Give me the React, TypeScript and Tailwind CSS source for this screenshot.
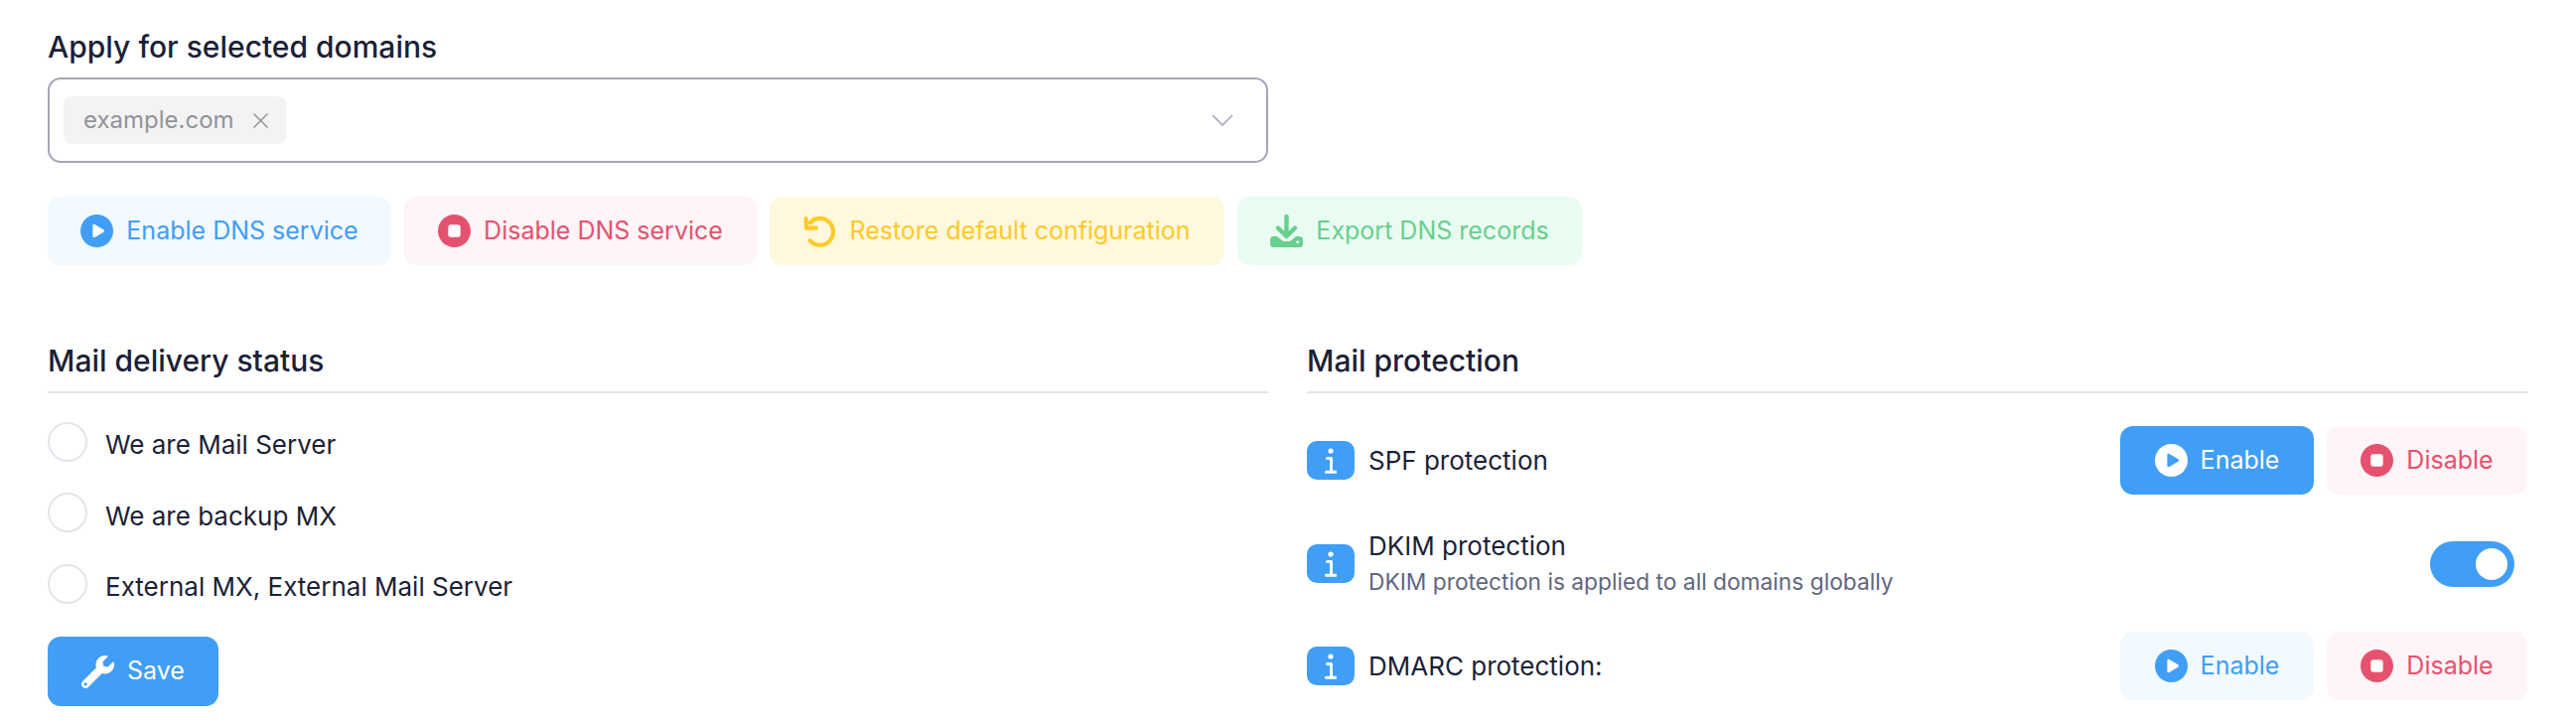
import React from 'react';
import { FaWrench } from 'react-icons/fa';

const font = "font-['Inter','Noto_Sans',sans-serif]";

function PlayIcon({ inverted }: { inverted?: boolean }) {
  return (
    <svg viewBox="0 0 32 32" className="w-[33px] h-[33px] shrink-0">
      <circle cx="16" cy="16" r="16" fill={inverted ? '#ffffff' : '#409ef6'} />
      <path
        d="M12 10.8c0-1 1.1-1.6 2-1.1l8.6 5.2c.9.5.9 1.7 0 2.2L14 22.300c-.9.5-2-.1-2-1.100z"
        fill={inverted ? '#409ef6' : '#ffffff'}
      />
    </svg>
  );
}

function StopIcon() {
  return (
    <svg viewBox="0 0 32 32" className="w-[33px] h-[33px] shrink-0">
      <circle cx="16" cy="16" r="16" fill="#e5526f" />
      <rect x="10" y="10" width="12" height="12" rx="2.500" fill="#ffffff" />
    </svg>
  );
}

function RestoreIcon() {
  return (
    <svg viewBox="0 0 32 32" className="w-[33px] h-[33px] shrink-0" fill="none" stroke="#ffc928" strokeWidth="4" strokeLinecap="round" strokeLinejoin="round">
      <path d="M2.500 4l.5 9.500 9.500-.5" />
      <path d="M6.500 8A13 13 0 1 1 6.500 25.500" />
    </svg>
  );
}

function ExportIcon() {
  return (
    <svg viewBox="0 0 33 33" className="w-[33px] h-[33px] shrink-0">
      <path d="M16.500 2v19M8 13.500l8.500 8.500 8.500-8.500" fill="none" stroke="#69cf8d" strokeWidth="4.400" strokeLinecap="round" strokeLinejoin="round" />
      <path
        d="M3.500 22H7l6 5h7l6-5h3.500A3.500 3.500 0 0 1 33 25.500v4a3.500 3.500 0 0 1-3.500 3.500h-26A3.500 3.500 0 0 1 0 29.500v-4A3.500 3.500 0 0 1 3.500 22z"
        fill="#69cf8d"
      />
      <circle cx="27.700" cy="27.800" r="1.500" fill="#e9fcf2" />
    </svg>
  );
}

function ActionButton({ tone, icon, label, className }: { tone: string; icon: React.ReactNode; label: string; className: string }) {
  return (
    <button className={`flex items-center justify-center gap-[13px] h-[69px] rounded-[13px] text-[25px] ${tone} ${className}`}>
      {icon}
      <span>{label}</span>
    </button>
  );
}

function DeliveryOption({ label }: { label: string }) {
  return (
    <label className="flex items-center gap-[18px] h-[41px] text-[26px] text-[#1c1f37]">
      <span className="w-[40px] h-[40px] rounded-full border-2 border-[#e3e5ec] bg-white shrink-0 -translate-y-[3px]" />
      <span>{label}</span>
    </label>
  );
}

function InfoBadge() {
  return (
    <span className="flex items-center justify-center w-[48px] h-[39px] rounded-[10px] bg-[#409ef6] shrink-0">
      <svg viewBox="0 0 12 26" className="w-[12px] h-[26px]" fill="none" stroke="#ffffff" strokeWidth="3" strokeLinecap="round" strokeLinejoin="round">
        <circle cx="6" cy="3" r="2.600" fill="#ffffff" stroke="none" />
        <path d="M2.500 10.500H6.500V24M1.500 24.300h9.500" />
      </svg>
    </span>
  );
}

export default function App() {
  return (
    <div className={`${font} w-[2594px] h-[732px] bg-white overflow-hidden pl-[48px] pr-[49px] pt-[28px]`}>
      <h2 className="text-[30px] leading-[38px] font-medium text-[#1c1f37]">Apply for selected domains</h2>

      <div className="w-[1229px] h-[86px] mt-[12px] flex items-center justify-between rounded-[13px] border-2 border-[#a3a5ba] pl-[14px] pr-[33px]">
        <span className="flex items-center h-[48px] w-[224px] rounded-[8px] bg-[#f3f3f3] pl-[20px] text-[24px] text-[#92939a]">
          example.com
          <svg viewBox="0 0 15 15" className="w-[15px] h-[15px] ml-[19px]" fill="none" stroke="#92939a" strokeWidth="1.500">
            <path d="M.5.5l14 14M14.500.5l-14 14" />
          </svg>
        </span>
        <svg viewBox="0 0 22 12" className="w-[22px] h-[12px]" fill="none" stroke="#a3a5ba" strokeWidth="1.600">
          <path d="M1 1l10 10L21 1" />
        </svg>
      </div>

      <div className="flex mt-[34px] gap-[13px]">
        <ActionButton tone="bg-[#f2f9ff] text-[#409ef6]" icon={<PlayIcon />} label="Enable DNS service" className="w-[346px]" />
        <ActionButton tone="bg-[#fff4f7] text-[#e5526f]" icon={<StopIcon />} label="Disable DNS service" className="w-[355px]" />
        <ActionButton tone="bg-[#fff8dc] text-[#ffc928]" icon={<RestoreIcon />} label="Restore default configuration" className="w-[458px]" />
        <ActionButton tone="bg-[#e9fcf2] text-[#69cf8d]" icon={<ExportIcon />} label="Export DNS records" className="w-[347px]" />
      </div>

      <div className="grid grid-cols-2 gap-[39px] mt-[75px]">
        <section>
          <h3 className="text-[30px] leading-[42px] font-medium text-[#1c1f37] border-b-2 border-[#e2e6ea] h-[54px]">Mail delivery status</h3>
          <div className="flex flex-col gap-[30.500px] mt-[31px]">
            <DeliveryOption label="We are Mail Server" />
            <DeliveryOption label="We are backup MX" />
            <DeliveryOption label="External MX, External Mail Server" />
          </div>
          <button className="flex items-center justify-center gap-[13px] w-[172px] h-[70px] mt-[30px] rounded-[13px] bg-[#409ef6] text-white text-[25px]">
            <FaWrench className="w-[33px] h-[33px] shrink-0" />
            <span>Save</span>
          </button>
        </section>

        <section>
          <h3 className="text-[30px] leading-[42px] font-medium text-[#1c1f37] border-b-2 border-[#e2e6ea] h-[54px]">Mail protection</h3>
          <div className="flex items-center justify-between h-[69px] mt-[33px]">
            <div className="flex items-center gap-[14px] text-[26px] text-[#1c1f37]">
              <InfoBadge />
              <span>SPF protection</span>
            </div>
            <div className="flex gap-[13px]">
              <ActionButton tone="bg-[#409ef6] text-white" icon={<PlayIcon inverted />} label="Enable" className="w-[195px]" />
              <ActionButton tone="bg-[#fff4f7] text-[#e5526f]" icon={<StopIcon />} label="Disable" className="w-[202px]" />
            </div>
          </div>
          <div className="flex items-center justify-between h-[69px] mt-[35px]">
            <div className="flex items-center gap-[14px]">
              <InfoBadge />
              <div>
                <div className="text-[26px] leading-[34px] text-[#1c1f37]">DKIM protection</div>
                <div className="text-[22.750px] leading-[32px] mt-[3.500px] text-[#62667f]">DKIM protection is applied to all domains globally</div>
              </div>
            </div>
            <span className="flex items-center justify-end w-[85px] h-[46px] mr-[13px] pr-[7px] rounded-full bg-[#409ef6]">
              <span className="w-[32px] h-[32px] rounded-full bg-white" />
            </span>
          </div>
          <div className="flex items-center justify-between h-[69px] mt-[34px]">
            <div className="flex items-center gap-[14px] text-[26px] text-[#1c1f37]">
              <InfoBadge />
              <span>DMARC protection:</span>
            </div>
            <div className="flex gap-[13px]">
              <ActionButton tone="bg-[#f2f9ff] text-[#409ef6]" icon={<PlayIcon />} label="Enable" className="w-[195px]" />
              <ActionButton tone="bg-[#fff4f7] text-[#e5526f]" icon={<StopIcon />} label="Disable" className="w-[202px]" />
            </div>
          </div>
        </section>
      </div>
    </div>
  );
}
